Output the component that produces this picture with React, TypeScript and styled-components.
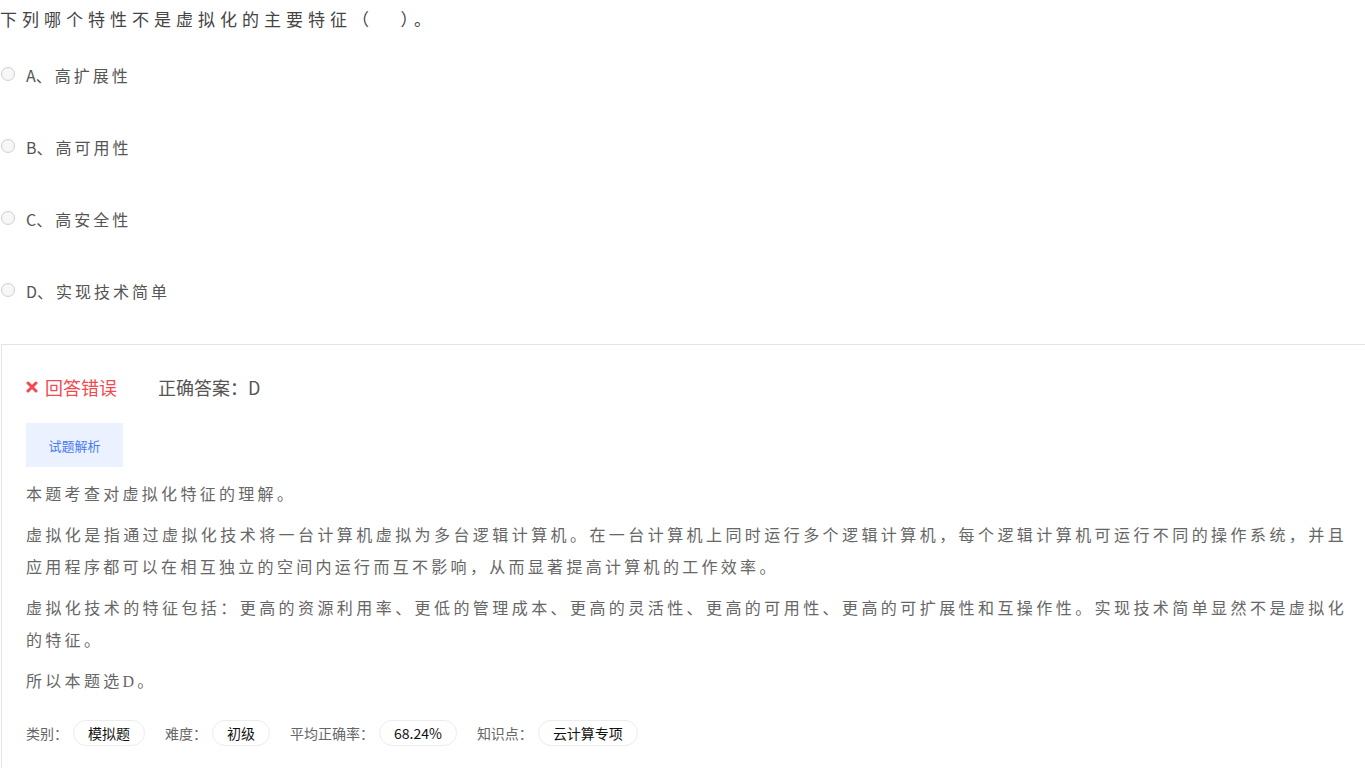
import React from 'react';
import styled, { createGlobalStyle } from 'styled-components';

const GlobalStyle = createGlobalStyle`
    html, body {
        margin: 0;
        padding: 0;
        background: #fff;
    }
    body {
        font-family: 'Noto Sans CJK SC', 'Noto Sans', sans-serif;
        color: #333;
    }
`;

const Page = styled.div`
    width: 1365px;
    overflow: hidden;
`;

const Question = styled.div`
    height: 39px;
    line-height: 38px;
    font-size: 17px;
    letter-spacing: 5px;
    color: #444;
    white-space: nowrap;
`;

const OptionList = styled.div`
    display: flex;
    flex-direction: column;
`;

const OptionRow = styled.label`
    display: flex;
    align-items: center;
    height: 72px;
    gap: 11px;
    padding-left: 1px;
    font-size: 16px;
    color: #555;
`;

const Radio = styled.span`
    width: 12px;
    height: 12px;
    border-radius: 50%;
    border: 1px solid #cfcfcf;
    background: #f7f7f7;
    flex-shrink: 0;
    margin-top: -2px;
`;

const OptionLetter = styled.span`
    letter-spacing: 0;
    margin-right: 3px;
`;

const OptionText = styled.span`
    letter-spacing: 3px;
`;

const AnalysisCard = styled.section`
    margin: 17px 0 0 1px;
    border: 1px solid #e3e3e3;
    border-right: none;
    padding: 30px 18px 30px 24px;
`;

const ResultRow = styled.div`
    display: flex;
    align-items: center;
    height: 24px;
    font-size: 18px;
`;

const Wrong = styled.span`
    display: flex;
    align-items: center;
    gap: 7px;
    color: #f5474f;
`;

const Correct = styled.span`
    margin-left: 41px;
    color: #555;
`;

const TabButton = styled.div`
    margin-top: 24px;
    width: 97px;
    height: 44px;
    display: flex;
    align-items: center;
    justify-content: center;
    background: #ebf1ff;
    color: #4a7bf7;
    font-size: 13px;
`;

const Analysis = styled.div`
    margin-top: 12px;
    font-family: 'Liberation Serif', 'Noto Sans CJK SC', serif;
    font-size: 16px;
    line-height: 32px;
    letter-spacing: 3.3px;
    color: #666;
    text-align: justify;
    p {
        margin: 0 0 9px;
    }
    p:last-child {
        margin-bottom: 0;
    }
`;

const MetaRow = styled.div`
    display: flex;
    align-items: center;
    margin-top: 22px;
    font-size: 14px;
`;

const MetaItem = styled.div`
    display: flex;
    align-items: center;
    gap: 5px;
    margin-right: 20px;
`;

const MetaLabel = styled.span`
    color: #666;
`;

const Pill = styled.span`
    height: 24px;
    line-height: 24px;
    padding: 0 14px;
    border: 1px solid #ececec;
    border-radius: 13px;
    color: #111;
`;

const options = [
    { key: 'A', text: '高扩展性' },
    { key: 'B', text: '高可用性' },
    { key: 'C', text: '高安全性' },
    { key: 'D', text: '实现技术简单' },
];

const meta = [
    { label: '类别：', value: '模拟题' },
    { label: '难度：', value: '初级' },
    { label: '平均正确率：', value: '68.24%' },
    { label: '知识点：', value: '云计算专项' },
];

const CrossIcon = () => (
    <svg width="12" height="12" viewBox="0 0 12 12">
        <path
            d="M2 2 L10 10 M10 2 L2 10"
            stroke="#f5474f"
            strokeWidth="3"
            strokeLinecap="round"
        />
    </svg>
);

export default function App() {
    return (
        <Page>
            <GlobalStyle />
            <Question>下列哪个特性不是虚拟化的主要特征（&nbsp;&nbsp;&nbsp;）。</Question>
            <OptionList>
                {options.map((o) => (
                    <OptionRow key={o.key}>
                        <Radio />
                        <span>
                            <OptionLetter>{o.key}、</OptionLetter>
                            <OptionText>{o.text}</OptionText>
                        </span>
                    </OptionRow>
                ))}
            </OptionList>
            <AnalysisCard>
                <ResultRow>
                    <Wrong>
                        <CrossIcon />
                        回答错误
                    </Wrong>
                    <Correct>正确答案：D</Correct>
                </ResultRow>
                <TabButton>试题解析</TabButton>
                <Analysis>
                    <p>本题考查对虚拟化特征的理解。</p>
                    <p>
                        虚拟化是指通过虚拟化技术将一台计算机虚拟为多台逻辑计算机。在一台计算机上同时运行多个逻辑计算机，每个逻辑计算机可运行不同的操作系统，并且应用程序都可以在相互独立的空间内运行而互不影响，从而显著提高计算机的工作效率。
                    </p>
                    <p>
                        虚拟化技术的特征包括：更高的资源利用率、更低的管理成本、更高的灵活性、更高的可用性、更高的可扩展性和互操作性。实现技术简单显然不是虚拟化的特征。
                    </p>
                    <p>所以本题选D。</p>
                </Analysis>
                <MetaRow>
                    {meta.map((m) => (
                        <MetaItem key={m.label}>
                            <MetaLabel>{m.label}</MetaLabel>
                            <Pill>{m.value}</Pill>
                        </MetaItem>
                    ))}
                </MetaRow>
            </AnalysisCard>
        </Page>
    );
}
